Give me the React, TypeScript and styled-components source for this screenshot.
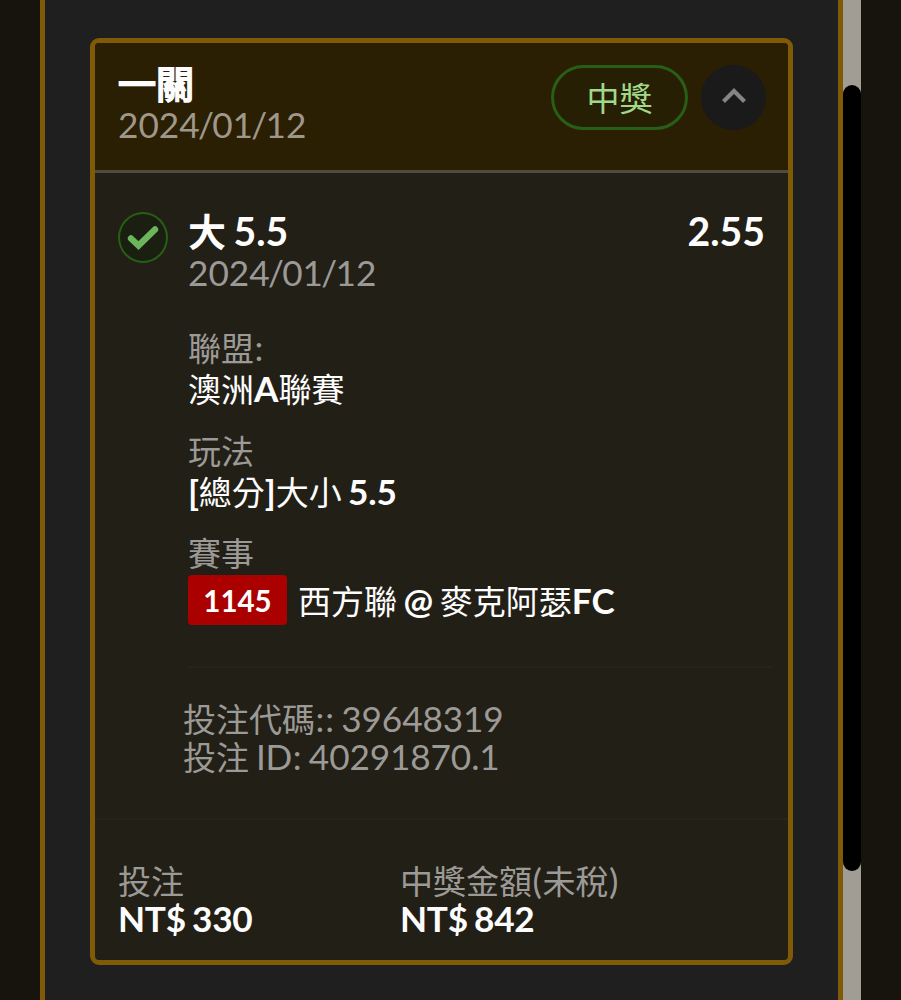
import React from "react";
import styled, { createGlobalStyle } from "styled-components";

const GlobalStyle = createGlobalStyle`
  * { box-sizing: border-box; }
  html, body { margin: 0; padding: 0; background: #17140d; }
  body { font-family: Lato, "Noto Sans CJK TC", sans-serif; overflow: hidden; }
`;

const Page = styled.div`
  display: flex;
  height: 1000px;
  width: 901px;
  padding-left: 40px;
  background: #17140d;
`;

const Panel = styled.main`
  width: 803px;
  height: 1000px;
  padding: 38px 45px 0;
  background: #1f1f1f;
  border: solid #7f5a07;
  border-width: 0 5px;
`;

const ScrollTrack = styled.div`
  width: 18px;
  height: 1000px;
  padding-top: 85px;
  background: #a19d94;
`;

const ScrollThumb = styled.div`
  height: 786px;
  border-radius: 9px;
  background: #000;
`;

const Card = styled.article`
  width: 703px;
  height: 927px;
  border: 5px solid #7f5a07;
  border-radius: 9px;
  background: #221f17;
  overflow: hidden;
`;

const CardHeader = styled.header`
  display: flex;
  justify-content: space-between;
  height: 130px;
  padding: 19px 22px 0 23px;
  background: #2a1e03;
  border-bottom: 3px solid #504b3b;
`;

const Actions = styled.div`
  display: flex;
  gap: 13px;
  padding-top: 3px;
`;

const StatusPill = styled.span`
  display: flex;
  align-items: center;
  justify-content: center;
  width: 137px;
  height: 65px;
  border: 3px solid #285f17;
  border-radius: 33px;
  background: #271f03;
`;

const CollapseButton = styled.button`
  display: flex;
  align-items: center;
  justify-content: center;
  width: 65px;
  height: 65px;
  padding: 0 0 4px;
  border: 0;
  border-radius: 50%;
  background: #1a1a1b;
`;

const Line = styled.div<{
  $size?: number;
  $height?: number;
  $weight?: number;
  $color?: string;
  $track?: number;
}>`
  font-size: ${(p) => p.$size ?? 35.2}px;
  line-height: ${(p) => p.$height ?? 41}px;
  height: ${(p) => p.$height ?? 41}px;
  font-weight: ${(p) => p.$weight ?? 400};
  color: ${(p) => p.$color ?? "#9c9a96"};
  letter-spacing: ${(p) => p.$track ?? 0}px;
  word-spacing: -2px;
  white-space: pre;
`;

const Han = styled.span<{ $size: number; $weight: number; $stroke: number }>`
  font-family: "Noto Sans CJK TC", sans-serif;
  font-size: ${(p) => p.$size}px;
  font-weight: ${(p) => p.$weight};
  line-height: 1px;
  letter-spacing: 0;
  -webkit-text-stroke: ${(p) => p.$stroke}px currentColor;
`;

const Mark = styled.span<{ $side: number }>`
  margin: 0 ${(p) => p.$side}px;
`;

type MixedProps = { text: string; size?: number; weight?: number; stroke?: number };

/* Sets Han runs in their own face and size, and spaces slashes, brackets and colons. */
const Mixed = ({ text, size = 33, weight = 400, stroke = 0 }: MixedProps) => (
  <>
    {text.split(/([\u4e00-\u9fff]+|[/():])/).map((run, i) => {
      if (i % 2 === 0) return run;
      if (/[/():]/.test(run)) {
        return (
          <Mark key={i} $side={run === "/" ? -1.7 : 0.5}>
            {run}
          </Mark>
        );
      }
      return (
        <Han key={i} $size={size} $weight={weight} $stroke={stroke}>
          {run}
        </Han>
      );
    })}
  </>
);

const Selection = styled.section`
  display: flex;
  padding: 37px 23px 0 23px;
  height: 493px;
`;

const CheckBadge = styled.div`
  display: flex;
  align-items: center;
  justify-content: center;
  flex: none;
  width: 50px;
  height: 51px;
  margin: 2px 20px 0 0;
  border: 2.5px solid #275f15;
  border-radius: 50%;
  background: #1b1f12;
`;

const Details = styled.div`
  flex: 1;
`;

const TitleRow = styled.div`
  display: flex;
  justify-content: space-between;
`;

const Field = styled.div<{ $gap: number }>`
  margin-top: ${(p) => p.$gap}px;
`;

const MatchRow = styled.div`
  display: flex;
  align-items: center;
  gap: 11px;
  height: 50px;
  margin-top: 2px;
`;

const MatchCode = styled.span`
  display: flex;
  align-items: center;
  justify-content: center;
  width: 99px;
  height: 50px;
  border-radius: 4px;
  background: #ab0000;
  color: #fff;
  font-size: 29.5px;
  font-weight: 700;
`;

const Rule = styled.hr<{ $left: number; $right: number }>`
  height: 2px;
  margin: 0 ${(p) => p.$right}px 0 ${(p) => p.$left}px;
  border: 0;
  background: #26231c;
`;

const References = styled.section`
  height: 150px;
  padding: 31px 0 0 88px;
`;

const Totals = styled.footer`
  display: grid;
  grid-template-columns: 282px 1fr;
  padding: 41px 23px 0;
`;

const WHITE = "#fdfdfd";

export default function App() {
  return (
    <>
      <GlobalStyle />
      <Page>
        <Panel>
          <Card>
            <CardHeader>
              <div>
                <Line $size={39} $height={42} $weight={700} $color={WHITE}>
                  <Mixed text="一關" size={38} stroke={2} />
                </Line>
                <Line $color="#9f988a">
                  <Mixed text="2024/01/12" />
                </Line>
              </div>
              <Actions>
                <StatusPill>
                  <Line $color="#a0d98a">
                    <Mixed text="中獎" />
                  </Line>
                </StatusPill>
                <CollapseButton aria-label="收合">
                  <svg width="26" height="20" viewBox="0 0 26 20" fill="none" stroke="#858585" strokeWidth="4.2">
                    <path d="M2.5 15.5 L13 5 L23.5 15.5" />
                  </svg>
                </CollapseButton>
              </Actions>
            </CardHeader>

            <Selection>
              <CheckBadge>
                <svg width="32" height="28" viewBox="0 0 32 28" fill="none" stroke="#6cb55c" strokeWidth="6.4">
                  <path d="M4 14.5 L11.5 21.5 L28 5.5" strokeLinecap="round" />
                </svg>
              </CheckBadge>
              <Details>
                <TitleRow>
                  <Line $size={39.2} $height={42} $weight={700} $color={WHITE}>
                    <Mixed text="大 5.5" size={38} weight={700} />
                  </Line>
                  <Line $size={39.2} $height={42} $weight={700} $color={WHITE}>
                    2.55
                  </Line>
                </TitleRow>
                <Line>
                  <Mixed text="2024/01/12" />
                </Line>
                <Field $gap={34}>
                  <Line>
                    <Mixed text="聯盟:" />
                  </Line>
                  <Line $weight={700} $color={WHITE}>
                    <Mixed text="澳洲A聯賽" />
                  </Line>
                </Field>
                <Field $gap={21}>
                  <Line>
                    <Mixed text="玩法" />
                  </Line>
                  <Line $weight={700} $color={WHITE} $track={-0.2}>
                    <Mixed text="[總分]大小 5.5" />
                  </Line>
                </Field>
                <Field $gap={20}>
                  <Line>
                    <Mixed text="賽事" />
                  </Line>
                  <MatchRow>
                    <MatchCode>1145</MatchCode>
                    <Line $weight={700} $color={WHITE}>
                      <Mixed text="西方聯 @ 麥克阿瑟FC" />
                    </Line>
                  </MatchRow>
                </Field>
              </Details>
            </Selection>

            <Rule $left={93} $right={15} />

            <References>
              <Line $height={38} $track={-0.12}>
                <Mixed text="投注代碼:: 39648319" />
              </Line>
              <Line $height={38} $track={-0.12}>
                <Mixed text="投注 ID: 40291870.1" />
              </Line>
            </References>

            <Rule $left={0} $right={0} />

            <Totals>
              <div>
                <Line $height={38}>
                  <Mixed text="投注" />
                </Line>
                <Line $height={38} $weight={700} $color={WHITE} $track={-0.28}>
                  NT$ 330
                </Line>
              </div>
              <div>
                <Line $height={38}>
                  <Mixed text="中獎金額(未稅)" />
                </Line>
                <Line $height={38} $weight={700} $color={WHITE} $track={-0.28}>
                  NT$ 842
                </Line>
              </div>
            </Totals>
          </Card>
        </Panel>
        <ScrollTrack>
          <ScrollThumb />
        </ScrollTrack>
      </Page>
    </>
  );
}
